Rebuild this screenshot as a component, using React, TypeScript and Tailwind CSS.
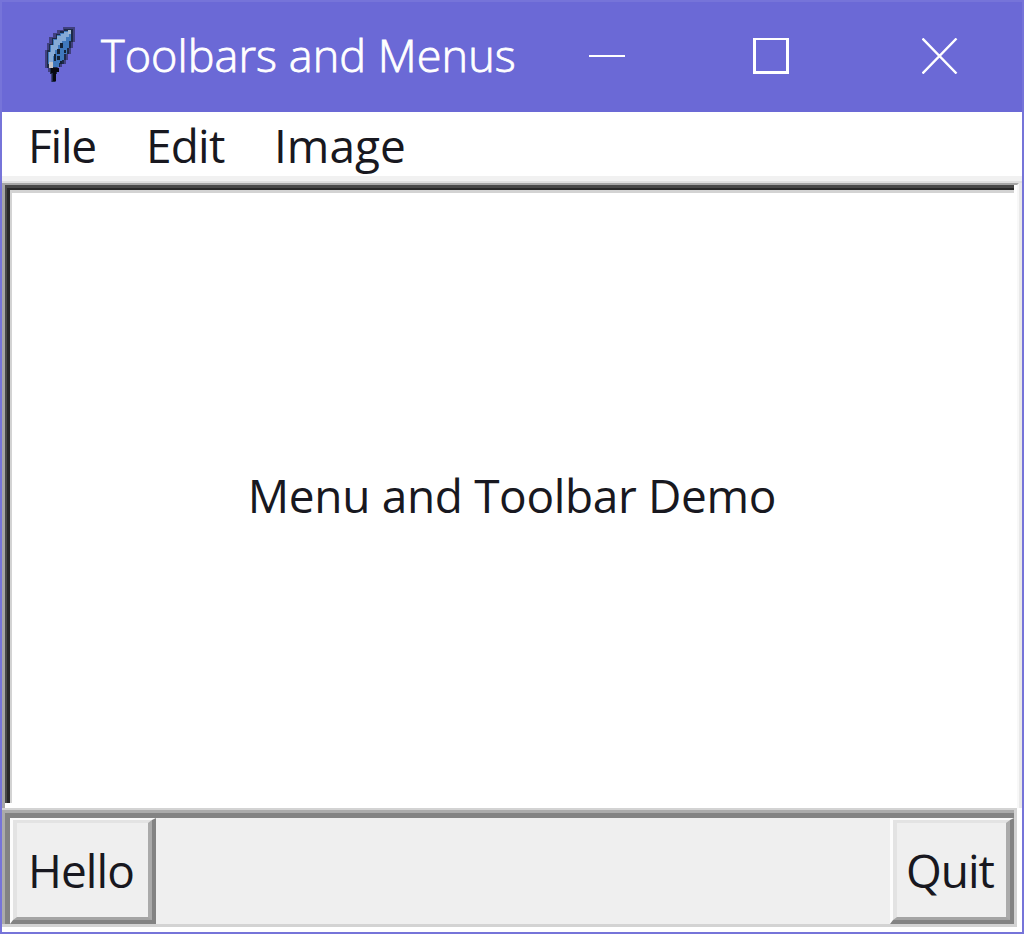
import React from "react";

function Feather() {
  return (
    <svg width="32" height="58" viewBox="0 0 32 58" className="relative -top-px shrink-0" aria-hidden="true">
      <path d="M19 1h12v15h-2v6h-2v6h-3v6h-2v4h-4v3h-4v5h-2v10H7V46H4v-4H1V24h2v-7h2v-6h4V7h4V4h6z" fill="#40407f" />
      <path d="M20 3h9v13h-2v6h-2v6h-3v6h-2v4h-4v3h-3v7h-2v8H8v-8H6v-6H3V24h2v-6h3v-6h4V8h4V5h4z" fill="#1d2a48" />
      <path d="M20 5h7v10h-2v7h-2v6h-3v6h-2v3h-3v4H6v-3H4V26h2v-7h3v-6h4V9h3V7h4z" fill="#3f78bd" />
      <path d="M20 6h5v5h-3v4h-4v4h-4v5h-3v6H9v8H5V26h2v-7h3v-5h3v-4h4V8h3z" fill="#86aad6" />
      <path d="M24 4h3v4h-3z" fill="#a4b8d0" />
      <path d="M16 17h3v5h-3zM13 23h3v5h-3zM13 30h3v4h-3zM20 24h2v3h-2zM10 28h2v7h-2zM16 35h2v3h-2z" fill="#142237" />
      <path d="M5 36h4v6H5z" fill="#c4c4c8" />
      <path d="M7 42h8v4h-3v9H9v-8H7z" fill="#090911" />
    </svg>
  );
}

function TitleBar() {
  return (
    <header className="flex h-[110px] shrink-0 items-center bg-[#6b69d6] pb-[2px] pl-[42px] text-white">
      <Feather />
      <h1 className="mb-[2px] ml-[25px] w-[488px] shrink-0 whitespace-nowrap font-['Open_Sans'] text-[45px] leading-[60px] font-light tracking-[0.05px] [-webkit-text-stroke:0.8px_white]">
        Toolbars and Menus
      </h1>
      <svg width="36" height="36" viewBox="0 0 36 36" className="shrink-0" shapeRendering="crispEdges">
        <path d="M0 17h36v2H0z" fill="white" />
      </svg>
      <svg width="36" height="36" viewBox="0 0 36 36" className="ml-32 shrink-0" shapeRendering="crispEdges">
        <path fillRule="evenodd" d="M0 0h36v36H0zM3 2v31h30V2z" fill="white" />
      </svg>
      <svg width="36" height="36" viewBox="0 0 36 36" className="ml-[133px] shrink-0">
        <path d="M.5.5l34 35M34.5.5l-34 35" stroke="white" strokeWidth="2.4" />
      </svg>
    </header>
  );
}

function MenuBar() {
  return (
    <nav className="flex h-16 shrink-0 items-start bg-white pt-[3px] pl-[26px] text-[46px] leading-[60px] whitespace-nowrap">
      <span className="w-[118px] tracking-[-1.2px]">File</span>
      <span className="w-[128px] tracking-[-0.8px]">Edit</span>
      <span className="tracking-[0px]">Image</span>
    </nav>
  );
}

function ToolButton({ label, className }: { label: string; className: string }) {
  return (
    <button className={`h-[106px] border-t-2 border-r-4 border-b-4 border-l-[3px] border-t-[#fafafa] border-r-[#838383] border-b-[#838383] border-l-[#fcfcfc] ${className}`}>
      <span className="flex h-full items-center justify-center border-t-[3px] border-r-[4px] border-b-[3px] border-l-[4px] border-t-[#e3e3e3] border-r-[#aaaaaa] border-b-[#a4a4a4] border-l-[#e3e3e3] bg-[#efefef] pr-[3px] whitespace-nowrap">
        {label}
      </span>
    </button>
  );
}

export default function App() {
  return (
    <div className="flex h-[934px] w-[1024px] flex-col overflow-hidden border-2 border-[#7674d9] bg-white font-['Open_Sans',sans-serif] text-[#181820]">
      <TitleBar />
      <MenuBar />
      <div className="h-[5px] shrink-0 bg-[#f1f1f1]" />
      <div className="h-[2px] shrink-0 bg-[#e0e0e0]" />
      <main className="flex h-[625px] shrink-0 border-r-[3px] border-[#e9e9e9]">
        <div className="w-[1017px] border-t-2 border-r-2 border-l-[3px] border-t-[#a6a6a6] border-r-[#f8f8f8] border-l-[#a6a6a6]">
          <div className="h-[618px] w-[1009px] border-t-[3px] border-l-2 border-t-[#484848] border-l-[#484848]">
            <div className="h-full border-t-2 border-l-[3px] border-[#292929]">
              <div className="flex h-full items-center justify-center border-t-[3px] border-l-2 border-[#d3d3d3] pr-[2px] pb-[5px] text-[46px] tracking-[-0.35px] whitespace-nowrap">
                Menu and Toolbar Demo
              </div>
            </div>
          </div>
        </div>
      </main>
      <footer className="mr-[5px] h-[119px] shrink-0 border-t-2 border-r-[3px] border-b-[3px] border-[#d3d3d3]">
        <div className="h-full border-t-[3px] border-l-[3px] border-[#ababab]">
          <div className="flex h-full justify-between border-t-[5px] border-l-[5px] border-[#838383] bg-[#efefef] text-[46px]">
            <ToolButton label="Hello" className="w-[146px] tracking-[-0.9px]" />
            <ToolButton label="Quit" className="w-[124px] tracking-[-1px]" />
          </div>
        </div>
      </footer>
    </div>
  );
}
